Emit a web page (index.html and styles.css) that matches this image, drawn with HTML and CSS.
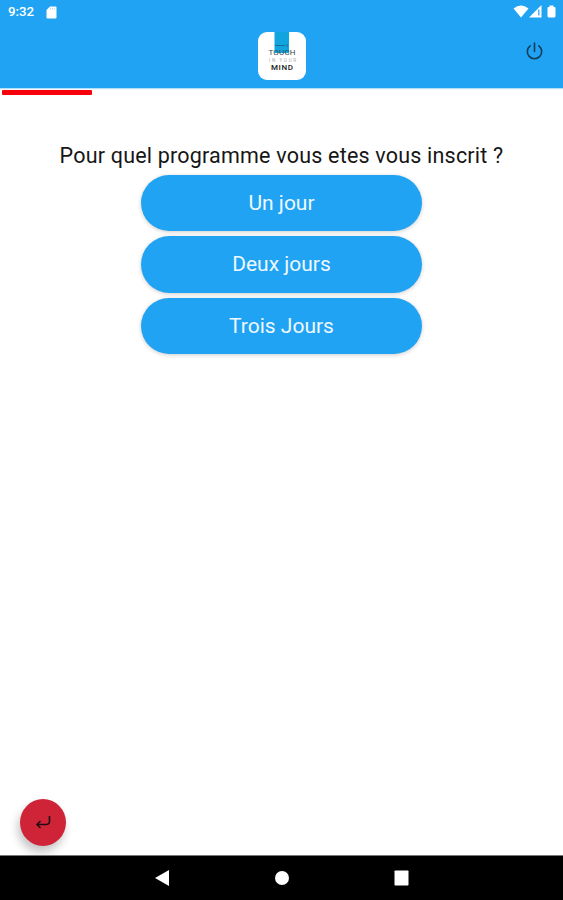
FILE: index.html
```html
<!DOCTYPE html>
<html lang="fr">
<head>
<meta charset="utf-8">
<title>Touch Mind</title>
<link rel="stylesheet" href="styles.css">
</head>
<body>
<div class="app">
  <header class="header">
    <div class="status">
      <span class="time">9:32</span>
      <svg class="sd" viewBox="0 0 11 13"><path d="M4 .5h5.500q1 0 1 1v10q0 1-1 1h-8q-1 0-1-1V4z"/><path class="slots" d="M4.500 2v1.500M6.500 2v1.500M8.500 2v1.500"/></svg>
      <svg class="signals" viewBox="0 0 44 16">
        <path d="M.5 4.500Q8 -1.500 15.500 4.500L8 13.500z"/>
        <path d="M28.500 1v12.500H16z"/><path class="signal-gap" d="M25.800 5.500v6"/>
        <path d="M36.500 1.500h4V3h1q1 0 1 1v8q0 1.500-1.500 1.500h-5Q34.500 13.500 34.500 12V4q0-1 1-1h1z"/>
      </svg>
    </div>
    <div class="toolbar">
      <svg class="logo" viewBox="0 0 48 48">
        <rect width="48" height="48" rx="9" fill="#fff"/>
        <path d="M16.500 0h14.500v21H16.500z" fill="#10a5df"/>
        <path d="M17 13.500h10M29 12v3" stroke="#176f98" stroke-width="1"/>
        <text x="10.500" y="22.500" textLength="27" font-size="8" fill="#3a474d">TOUCH</text>
        <text x="11" y="29.800" textLength="27" font-size="4.500" fill="#aaa">IN YOUR</text>
        <text x="13" y="38" textLength="22" font-size="8" font-weight="500" fill="#222">MIND</text>
      </svg>
      <svg class="power" viewBox="0 0 18 20"><path d="M9 1v9M4.400 4A7.600 7.600 0 1 0 13.600 4"/></svg>
    </div>
  </header>
  <div class="progress"></div>
  <main class="content">
    <h1 class="question">Pour quel programme vous etes vous inscrit ?</h1>
    <div class="choices">
      <button class="choice">Un jour</button>
      <button class="choice">Deux jours</button>
      <button class="choice">Trois Jours</button>
    </div>
  </main>
  <button class="back" aria-label="Retour"><svg viewBox="0 0 16 14"><path d="M14.500 0v5.500Q14.500 8.500 11 8.500H2M5.500 5L2 8.500 5.500 12"/></svg></button>
  <nav class="nav">
    <svg viewBox="0 0 16 16"><path d="M15 0v16L1 8z"/></svg>
    <svg viewBox="0 0 16 16"><circle cx="8" cy="8" r="7"/></svg>
    <svg viewBox="0 0 16 16"><rect x=".5" y=".5" width="14" height="15" rx=".8"/></svg>
  </nav>
</div>
</body>
</html>
```
FILE: styles.css
```css
* { box-sizing: border-box; }
body { margin: 0; font-family: Roboto, "Liberation Sans", sans-serif; background: #fff; }
button { border: 0; padding: 0; font: inherit; }
.app { height: 900px; display: flex; flex-direction: column; overflow: hidden; }
.header { height: 88px; flex: none; background: #21a3f3; box-shadow: 0 1px 1px rgba(33, 163, 243, .35); }
.status { height: 24px; display: flex; align-items: center; padding: 0 6px 0 8px; }
.time { width: 38px; color: #fff; font-size: 13.3px; font-weight: 500; line-height: 24px; }
.sd { width: 11px; height: 13px; fill: #fff; }
.slots { stroke: #9bd4fa; stroke-width: .8; }
.signals { width: 44px; height: 16px; margin-left: auto; fill: #fff; }
.signal-gap { stroke: #21a3f3; stroke-width: 1.2; }
.toolbar { height: 64px; display: grid; grid-template-columns: 1fr 48px 1fr; align-items: start; padding: 8px 20px 0; }
.logo { width: 48px; height: 48px; grid-column: 2; }
.power { width: 17px; height: 19px; justify-self: end; margin-top: 10px; fill: none; stroke: #123c58; stroke-width: 1.7; stroke-linecap: round; }
.progress { width: 90px; height: 5px; flex: none; margin: 2px 0 0 2px; background: #f8000b; border-radius: 1px; }
.content { flex: 1; padding-top: 48px; }
.question { margin: 0; height: 31.500px; font-size: 21.500px; font-weight: 400; line-height: 26px; letter-spacing: .2px; text-align: center; color: #161616; white-space: nowrap; }
.choices { display: flex; flex-direction: column; align-items: center; gap: 5px; }
.choice { width: 281px; height: 56.500px; border-radius: 29px; background: #21a3f3; color: #eef8ff; font-size: 21px; line-height: 57px; box-shadow: 0 1px 4px rgba(0, 0, 0, .2); }
.back { width: 46px; height: 47px; flex: none; margin: 0 0 9px 20px; border-radius: 50%; background: #cf2438; box-shadow: -2px 6px 10px rgba(0, 0, 0, .24); display: grid; place-items: center; }
.back svg { width: 16px; height: 14px; fill: none; stroke: #240d12; stroke-width: 1.6; }
.nav { position: relative; height: 45px; flex: none; display: flex; justify-content: center; align-items: center; gap: 104px; background: #000; border-top: 1px solid #777; }
.nav svg { width: 16px; height: 16px; fill: #fff; }
```
